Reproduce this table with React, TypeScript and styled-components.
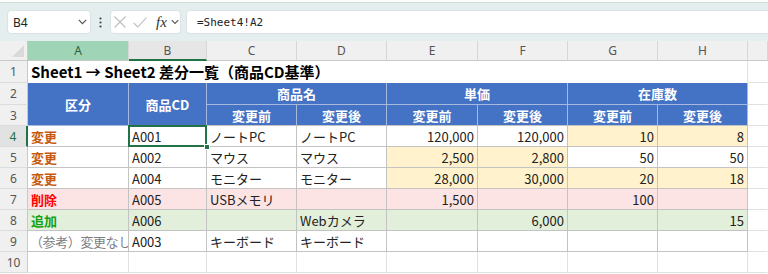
import React from "react";
import styled, { createGlobalStyle } from "styled-components";

const GlobalStyle = createGlobalStyle`
  body {
    margin: 0;
    background: #fff;
  }
  * {
    box-sizing: border-box;
  }
`;

const Page = styled.div`
  width: 768px;
  height: 274px;
  overflow: hidden;
  background: #fff;
  font-family: "Noto Sans CJK JP", "Noto Sans", sans-serif;
`;

const RibbonEdge = styled.div`
  height: 3px;
  background: #fbfcfc;
  border-bottom: 1px solid #d2d9d9;
`;

const FormulaBar = styled.div`
  height: 38px;
  display: flex;
  align-items: center;
  padding-left: 7px;
  background: #e5eeee;
`;

const Box = styled.div<{ $width?: number }>`
  height: 24px;
  width: ${(p) => (p.$width ? `${p.$width}px` : "auto")};
  flex: ${(p) => (p.$width ? "0 0 auto" : "1 1 auto")};
  display: flex;
  align-items: center;
  background: #fff;
  border: 1px solid #dbe2e2;
  border-radius: 4px;
`;

const NameBox = styled(Box)`
  justify-content: space-between;
  padding: 0 3px 0 5px;
  font-family: "Noto Sans", sans-serif;
  font-size: 12px;
  color: #222;
`;

const Dots = styled.div`
  width: 19px;
  display: flex;
  justify-content: center;
`;

const FxBox = styled(Box)`
  padding-left: 3px;
  gap: 7px;
`;

const FxLabel = styled.span`
  font-family: "Liberation Serif", serif;
  font-style: italic;
  font-size: 15px;
  color: #333;
  margin-left: 2px;
  margin-right: -3px;
`;

const FormulaInput = styled(Box)`
  margin-left: 5px;
  padding-left: 10px;
  border-right: none;
  border-radius: 4px 0 0 4px;
  font-family: "DejaVu Sans Mono", monospace;
  font-size: 11px;
  color: #222;
`;

const Sheet = styled.div`
  display: grid;
  grid-template-columns: 28px 101px 78px 90px 90px 91px 90px 90px 90px 20px;
  grid-template-rows: 20px 22px 22px 21px repeat(7, 21px);
`;

const Corner = styled.div`
  background: #f0f0f0;
  border-right: 1px solid #c8c8c8;
  border-bottom: 1px solid #c8c8c8;
  display: flex;
  align-items: flex-end;
  justify-content: flex-end;
  padding: 0 3px 3px 0;
`;

const CornerMark = styled.div`
  width: 12px;
  height: 12px;
  background: #d9d9d9;
  clip-path: polygon(100% 0, 100% 100%, 0 100%);
`;

const ColHead = styled.div<{ $state?: "full" | "edge" }>`
  display: flex;
  align-items: center;
  justify-content: center;
  font-family: "Noto Sans", sans-serif;
  font-size: 12px;
  color: ${(p) => (p.$state === "full" ? "#2f5d43" : "#555")};
  background: ${(p) =>
    p.$state === "full" ? "#9fd5b6" : p.$state === "edge" ? "#e6e6e6" : "#f0f0f0"};
  border-right: 1px solid #d6d6d6;
  border-bottom: ${(p) =>
    p.$state === "edge" ? "2px solid #217346" : "1px solid #c8c8c8"};
`;

const RowHead = styled.div<{ $active?: boolean }>`
  display: flex;
  align-items: center;
  justify-content: center;
  font-family: "Noto Sans", sans-serif;
  font-size: 12px;
  color: ${(p) => (p.$active ? "#217346" : "#555")};
  background: ${(p) => (p.$active ? "#e2e2e2" : "#f0f0f0")};
  border-right: ${(p) => (p.$active ? "2px solid #217346" : "1px solid #c8c8c8")};
  border-bottom: 1px solid #dcdcdc;
`;

type Line = "table" | "head" | "grid" | "none";
const lineColor: Record<Line, string> = {
  table: "#c3c3c3",
  head: "#a7badd",
  grid: "#e1e1e1",
  none: "transparent",
};

const Cell = styled.div<{
  $bg?: string;
  $color?: string;
  $bold?: boolean;
  $align?: "left" | "center" | "right";
  $line?: Line;
  $bottom?: Line;
  $cols?: number;
  $rows?: number;
  $size?: number;
}>`
  grid-column: span ${(p) => p.$cols ?? 1};
  grid-row: span ${(p) => p.$rows ?? 1};
  display: flex;
  align-items: center;
  justify-content: ${(p) =>
    p.$align === "right" ? "flex-end" : p.$align === "center" ? "center" : "flex-start"};
  padding: 0 3px;
  background: ${(p) => p.$bg ?? "#fff"};
  color: ${(p) => p.$color ?? "#222"};
  font-size: ${(p) => p.$size ?? 13}px;
  font-weight: ${(p) => (p.$bold ? 700 : 400)};
  border-right: 1px solid ${(p) => lineColor[p.$line ?? "table"]};
  border-bottom: 1px solid ${(p) => lineColor[p.$bottom ?? p.$line ?? "table"]};
  white-space: nowrap;
  overflow: hidden;
`;

/* label that spills to the edge of column A, as Excel clips it */
const NoteCell = styled(Cell)`
  padding-left: 2px;
  letter-spacing: -0.4px;
`;

const SelectedCell = styled(Cell)`
  position: relative;
  overflow: visible;
`;

const SelectionFrame = styled.div`
  position: absolute;
  top: -1px;
  left: -1px;
  right: -1px;
  bottom: -1px;
  border: 2px solid #217346;
  z-index: 2;
`;

const FillHandle = styled.div`
  position: absolute;
  right: -4px;
  bottom: -4px;
  width: 6px;
  height: 6px;
  background: #217346;
  border: 1px solid #fff;
  z-index: 3;
`;

const Chevron = ({ w = 9 }: { w?: number }) => (
  <svg width={w} height="6" viewBox="0 0 9 6">
    <path d="M0.8 0.8 L4.5 4.6 L8.2 0.8" fill="none" stroke="#555" strokeWidth="1.2" />
  </svg>
);

const fills = {
  white: "#ffffff",
  yellow: "#fff2cc",
  pink: "#fce4e4",
  green: "#e2efda",
};

const tones = {
  change: { color: "#c55a11", bold: true },
  delete: { color: "#ff0000", bold: true },
  add: { color: "#12a012", bold: true },
  muted: { color: "#7f7f7f", bold: false },
};

type Row = {
  kind: keyof typeof tones;
  label: string;
  fill: keyof typeof fills;
  yellow: number[];
  values: string[];
};

const rows: Row[] = [
  { kind: "change", label: "変更", fill: "white", yellow: [6, 7], values: ["A001", "ノートPC", "ノートPC", "120,000", "120,000", "10", "8"] },
  { kind: "change", label: "変更", fill: "white", yellow: [4, 5], values: ["A002", "マウス", "マウス", "2,500", "2,800", "50", "50"] },
  { kind: "change", label: "変更", fill: "white", yellow: [4, 5, 6, 7], values: ["A004", "モニター", "モニター", "28,000", "30,000", "20", "18"] },
  { kind: "delete", label: "削除", fill: "pink", yellow: [], values: ["A005", "USBメモリ", "", "1,500", "", "100", ""] },
  { kind: "add", label: "追加", fill: "green", yellow: [], values: ["A006", "", "Webカメラ", "", "6,000", "", "15"] },
  { kind: "muted", label: "（参考）変更なし", fill: "white", yellow: [], values: ["A003", "キーボード", "キーボード", "", "", "", ""] },
];

const letters = ["A", "B", "C", "D", "E", "F", "G", "H", ""];
const blue = "#4472c4";

export default function App() {
  return (
    <Page>
      <GlobalStyle />
      <RibbonEdge />
      <FormulaBar>
        <NameBox $width={84}>
          <span>B4</span>
          <Chevron />
        </NameBox>
        <Dots>
          <svg width="3" height="11" viewBox="0 0 3 11">
            <circle cx="1.5" cy="1.5" r="1.1" fill="#444" />
            <circle cx="1.5" cy="5.5" r="1.1" fill="#444" />
            <circle cx="1.5" cy="9.5" r="1.1" fill="#444" />
          </svg>
        </Dots>
        <FxBox $width={71}>
          <svg width="12" height="12" viewBox="0 0 12 12">
            <path d="M0.5 0.5 L11.5 11.5 M11.5 0.5 L0.5 11.5" stroke="#bdbdbd" strokeWidth="1.1" />
          </svg>
          <svg width="14" height="11" viewBox="0 0 14 11">
            <path d="M0.6 5.8 L4.8 10 L13.4 0.6" fill="none" stroke="#bdbdbd" strokeWidth="1.1" />
          </svg>
          <FxLabel>fx</FxLabel>
          <Chevron w={8} />
        </FxBox>
        <FormulaInput>=Sheet4!A2</FormulaInput>
      </FormulaBar>

      <Sheet>
        <Corner>
          <CornerMark />
        </Corner>
        {letters.map((l, i) => (
          <ColHead key={i} $state={i === 0 ? "full" : i === 1 ? "edge" : undefined}>
            {l}
          </ColHead>
        ))}

        <RowHead>1</RowHead>
        <Cell $cols={8} $size={15} $bold $color="#000" $line="grid" $bottom="none">
          Sheet1 → Sheet2 差分一覧（商品CD基準）
        </Cell>
        <Cell $line="none" $bottom="grid" />

        <RowHead>2</RowHead>
        <Cell $rows={2} $bg={blue} $color="#fff" $bold $align="center" $line="head">区分</Cell>
        <Cell $rows={2} $bg={blue} $color="#fff" $bold $align="center" $line="head">商品CD</Cell>
        <Cell $cols={2} $bg={blue} $color="#fff" $bold $align="center" $line="head">商品名</Cell>
        <Cell $cols={2} $bg={blue} $color="#fff" $bold $align="center" $line="head">単価</Cell>
        <Cell $cols={2} $bg={blue} $color="#fff" $bold $align="center" $line="head">在庫数</Cell>
        <Cell $line="none" $bottom="grid" />

        <RowHead>3</RowHead>
        {[0, 1, 2, 3, 4, 5].map((i) => (
          <Cell key={i} $bg={blue} $color="#fff" $bold $align="center" $line="head" $bottom="table">
            {i % 2 === 0 ? "変更前" : "変更後"}
          </Cell>
        ))}
        <Cell $line="none" $bottom="grid" />

        {rows.map((r, ri) => {
          const tone = tones[r.kind];
          const Label = r.kind === "muted" ? NoteCell : Cell;
          return (
            <React.Fragment key={ri}>
              <RowHead $active={ri === 0}>{ri + 4}</RowHead>
              <Label $bg={fills[r.fill]} $color={tone.color} $bold={tone.bold}>
                {r.label}
              </Label>
              {r.values.map((v, ci) => {
                const col = ci + 1;
                const bg = r.yellow.includes(col) ? fills.yellow : fills[r.fill];
                const align = col >= 4 ? "right" : "left";
                if (ri === 0 && col === 1) {
                  return (
                    <SelectedCell key={ci} $bg={bg} $align={align}>
                      {v}
                      <SelectionFrame />
                      <FillHandle />
                    </SelectedCell>
                  );
                }
                return (
                  <Cell key={ci} $bg={bg} $align={align}>
                    {v}
                  </Cell>
                );
              })}
              <Cell $line="none" $bottom="grid" />
            </React.Fragment>
          );
        })}

        <RowHead>10</RowHead>
        {letters.map((_, i) => (
          <Cell key={i} $line={i === 8 ? "none" : "grid"} $bottom="grid" />
        ))}
      </Sheet>
    </Page>
  );
}
